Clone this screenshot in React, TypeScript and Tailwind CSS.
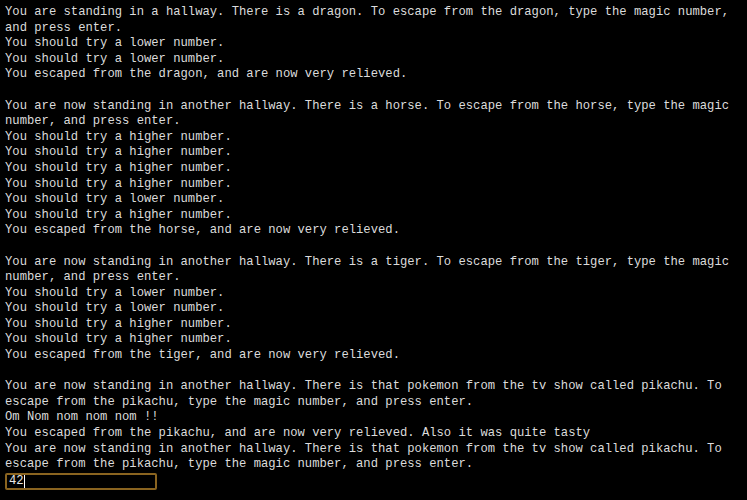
import React from "react";

const lines: string[] = [
  "You are standing in a hallway. There is a dragon. To escape from the dragon, type the magic number,",
  "and press enter.",
  "You should try a lower number.",
  "You should try a lower number.",
  "You escaped from the dragon, and are now very relieved.",
  "",
  "You are now standing in another hallway. There is a horse. To escape from the horse, type the magic",
  "number, and press enter.",
  "You should try a higher number.",
  "You should try a higher number.",
  "You should try a higher number.",
  "You should try a higher number.",
  "You should try a lower number.",
  "You should try a higher number.",
  "You escaped from the horse, and are now very relieved.",
  "",
  "You are now standing in another hallway. There is a tiger. To escape from the tiger, type the magic",
  "number, and press enter.",
  "You should try a lower number.",
  "You should try a lower number.",
  "You should try a higher number.",
  "You should try a higher number.",
  "You escaped from the tiger, and are now very relieved.",
  "",
  "You are now standing in another hallway. There is that pokemon from the tv show called pikachu. To",
  "escape from the pikachu, type the magic number, and press enter.",
  "Om Nom nom nom nom !!",
  "You escaped from the pikachu, and are now very relieved. Also it was quite tasty",
  "You are now standing in another hallway. There is that pokemon from the tv show called pikachu. To",
  "escape from the pikachu, type the magic number, and press enter.",
];

export default function App() {
  return (
    <div className="w-[747px] h-[500px] bg-black overflow-hidden">
      <div
        className="pl-[5px] pt-[5px] text-[12.2px] leading-[15.6px] text-[#dcdcdc] whitespace-pre"
        style={{ fontFamily: '"Courier New", "Liberation Mono", monospace' }}
      >
        {lines.map((l, i) => (
          <div key={i} className="h-[15.6px]">
            {l}
          </div>
        ))}
        <div className="w-[152px] h-[17px] border-2 border-[#8a6420] rounded-[2px] flex items-center pl-[2px]">
          <span className="text-[#e6e6e6]">42</span>
          <span className="w-[1px] h-[13px] bg-white"></span>
        </div>
      </div>
    </div>
  );
}
